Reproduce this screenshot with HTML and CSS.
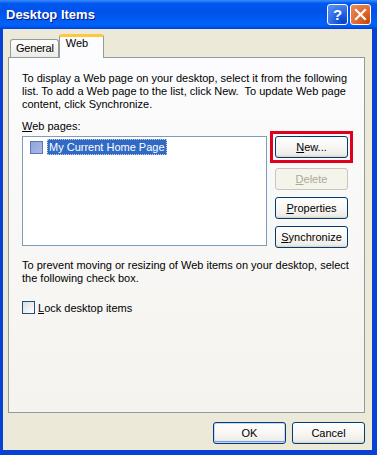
FILE: index.html
```html
<!DOCTYPE html>
<html>
<head>
<meta charset="utf-8">
<link rel="stylesheet" href="styles.css">
</head>
<body>
<div class="window">
  <div class="titlebar">
    <span class="title">Desktop Items</span>
    <div class="title-buttons">
      <span class="tbtn help">?</span>
      <span class="tbtn close">
        <svg width="13" height="13" viewBox="0 0 13 13"><path d="M2 2 L11 11 M11 2 L2 11" stroke="#fff" stroke-width="2.2" stroke-linecap="square"/></svg>
      </span>
    </div>
  </div>
  <div class="client">
    <div class="tabs">
      <div class="tab">General</div>
      <div class="tab active">Web</div>
    </div>
    <div class="panel">
      <p class="desc">To display a Web page on your desktop, select it from the following list. To add a Web page to the list, click New.&nbsp; To update Web page content, click Synchronize.</p>
      <div class="label"><u>W</u>eb pages:</div>
      <div class="list-row">
        <div class="listbox">
          <div class="item">
            <span class="item-check"></span>
            <span class="item-text">My Current Home Page</span>
          </div>
        </div>
        <div class="side-buttons">
          <div class="highlight"><button class="btn"><u>N</u>ew...</button></div>
          <button class="btn disabled"><u>D</u>elete</button>
          <button class="btn"><u>P</u>roperties</button>
          <button class="btn"><u>S</u>ynchronize</button>
        </div>
      </div>
      <p class="desc desc2">To prevent moving or resizing of Web items on your desktop, select the following check box.</p>
      <label class="check"><span class="box"></span><span><u>L</u>ock desktop items</span></label>
    </div>
    <div class="footer">
      <button class="btn default">OK</button>
      <button class="btn">Cancel</button>
    </div>
  </div>
</div>
</body>
</html>
```
FILE: styles.css
```css
html, body {
  margin: 0;
  padding: 0;
  background: #fff;
}
body {
  font-family: "Liberation Sans", Arial, sans-serif;
  font-size: 11px;
  color: #000;
}
.window {
  width: 377px;
  height: 455px;
  box-sizing: border-box;
  display: flex;
  flex-direction: column;
  padding: 0 5px 5px 3px;
  background-color: #0841D6;
}
.titlebar {
  height: 29px;
  margin: 0 -5px 0 -3px;
  padding: 0 6px 0 6px;
  display: flex;
  align-items: center;
  justify-content: space-between;
  background: linear-gradient(180deg, #3A8CFF 0, #0058EE 12%, #0052EA 40%, #0062F8 85%, #0058F0 92%, #003DD7 100%);
  box-sizing: border-box;
}
.title {
  color: #fff;
  font-family: "Liberation Sans", Arial, sans-serif;
  font-weight: bold;
  font-size: 13px;
  text-shadow: 1px 1px 0 #0A1883;
  padding-bottom: 1px;
}
.title-buttons {
  display: flex;
  gap: 2px;
  margin-top: -1px;
}
.tbtn {
  width: 21px;
  height: 21px;
  box-sizing: border-box;
  border: 1px solid #fff;
  border-radius: 3px;
  display: flex;
  align-items: center;
  justify-content: center;
  color: #fff;
  font-weight: bold;
  font-size: 15px;
}
.help {
  background: radial-gradient(circle at 80% 90%, #0043CF 0, #2663E0 40%, #4D88F3 80%);
}
.close {
  background: radial-gradient(circle at 90% 90%, #CC4600 0, #DC6527 40%, #E8865A 90%);
}
.client {
  flex: 1;
  background: #ECE9D8;
  display: flex;
  flex-direction: column;
  padding: 6px 7px 0 5px;
}
.tabs {
  display: flex;
  align-items: flex-end;
  padding-left: 2px;
  height: 22px;
  position: relative;
  z-index: 1;
}
.tab {
  height: 18px;
  box-sizing: border-box;
  border: 1px solid #919B9C;
  border-bottom: none;
  border-radius: 3px 3px 0 0;
  background: linear-gradient(#FFFFFF, #ECEBE6);
  padding: 2px 4px 0 5px;
  letter-spacing: -0.2px;
}
.tab.active {
  background: #FCFCFE;
  border-top: 3px solid #FFC83C;
  padding: 0 15px 0 6px;
  margin-bottom: -1px;
  height: 24px;
  letter-spacing: 0;
}
.panel {
  flex: 0 0 auto;
  height: 356px;
  box-sizing: border-box;
  border: 1px solid #919B9C;
  background: linear-gradient(#FCFCFE, #F4F3EE);
  padding: 14px 10px 0 13px;
}
.desc {
  margin: 0;
  line-height: 13px;
}
.label {
  margin-top: 9px;
  line-height: 13px;
}
.list-row {
  display: flex;
  margin-top: 3px;
}
.listbox {
  width: 245px;
  height: 110px;
  box-sizing: border-box;
  border: 1px solid #7F9DB9;
  background: #fff;
  padding: 2px 0 0 7px;
}
.item {
  display: flex;
  align-items: center;
  gap: 4px;
}
.item-check {
  width: 13px;
  height: 13px;
  box-sizing: border-box;
  border: 1px solid #5A77BE;
  background: linear-gradient(135deg, #8EA3DD, #A9BBE6);
}
.item-text {
  background: #316AC5;
  color: #fff;
  height: 16px;
  line-height: 16px;
  padding: 0 2px;
  outline: 1px dotted #C6D3EE;
  outline-offset: -1px;
}
.side-buttons {
  display: flex;
  flex-direction: column;
  align-items: flex-start;
  margin-left: 8px;
  gap: 7px;
}
.side-buttons .btn {
  height: 22px;
}
.highlight {
  border: 3px solid #E0001C;
  padding: 2px;
  margin: -5px 0 -2px -5px;
  line-height: 0;
}
.btn {
  width: 73px;
  height: 21px;
  box-sizing: border-box;
  border: 1px solid #003C74;
  border-radius: 3px;
  background: linear-gradient(#FFFFFF 0, #F6F5F1 60%, #ECEBE6 90%, #D6D0C5 100%);
  font-family: "Liberation Sans", Arial, sans-serif;
  font-size: 11px;
  color: #000;
  padding: 0;
  line-height: 19px;
}
.btn.disabled {
  border-color: #C9C7BA;
  color: #ACA899;
  background: #F5F4EA;
}
.btn.default {
  box-shadow: inset 0 0 0 1px #C5D6F8, inset 0 -1px 0 1px #7A9BE0;
}
.desc2 {
  margin-top: 11px;
}
.check {
  display: flex;
  align-items: center;
  gap: 3px;
  margin-top: 16px;
}
.box {
  width: 13px;
  height: 13px;
  box-sizing: border-box;
  border: 1px solid #1C5180;
  background: linear-gradient(135deg, #DCDCD7, #FFFFFF);
}
.footer {
  display: flex;
  justify-content: flex-end;
  gap: 6px;
  padding-top: 9px;
}
.footer .btn {
  width: 73px;
  height: 22px;
}
```
